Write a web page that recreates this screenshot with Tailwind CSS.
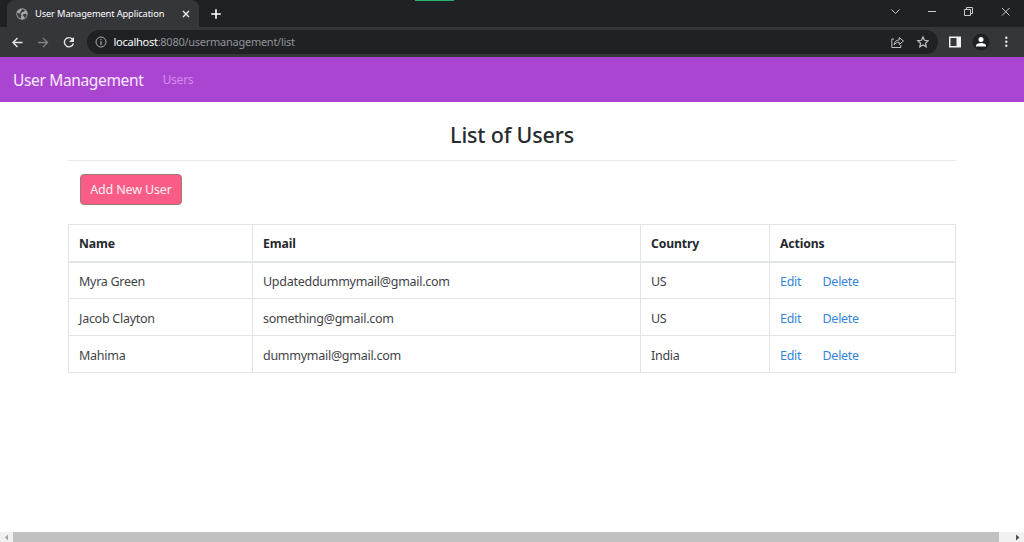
<!DOCTYPE html>
<html lang="en">
<head>
<meta charset="utf-8">
<title>User Management Application</title>
<script src="https://cdn.jsdelivr.net/npm/@tailwindcss/browser@4"></script>
</head>
<body class="relative flex h-[542px] w-[1024px] flex-col overflow-hidden bg-white font-['Noto_Sans','Open_Sans',sans-serif] text-[12.5px] text-[#3f4347]">
  <!-- Tab strip -->
  <div class="flex h-[27px] shrink-0 bg-[#202124] text-white">
    <div class="ml-[7px] flex w-[192px] items-center rounded-t-lg bg-[#35363a] pl-[9px] pr-[7px]">
      <svg class="size-3 shrink-0" viewBox="0 0 12 12"><circle cx="6" cy="6" r="5.7" fill="#a3a6aa"/><path d="M1 4.800l3.200.6 1.300 1.600-.6 1.300.2 2.200C2.600 10.200 1 8 1 4.800zM6 1.200l3 .8-1 1.800-2 .3-.8 1.300H3.700L5 3zM7 6.400l2-.7 1.800.8c0 1.700-.9 3-2.300 3.800L8.200 8.500 6.800 7.800z" fill="#3b3c40"/></svg>
      <span class="ml-[7px] whitespace-nowrap text-[9.3px] leading-[27px] tracking-[-0.13px]">User Management Application</span>
      <svg class="ml-auto size-[12px]" viewBox="0 0 12 12" stroke="#eee" stroke-width="1.400"><path d="M3 3l6 6M9 3l-6 6"/></svg>
    </div>
    <svg class="ml-[10px] mt-[7px] size-[14px]" viewBox="0 0 14 14" stroke="#fff" stroke-width="1.600"><path d="M7 2.200v9.600M2.200 7h9.600"/></svg>
    <div class="ml-auto flex h-[24px] items-center">
      <svg class="h-[24px] w-[134px]" viewBox="0 0 134 24" fill="none" stroke="#c9cacc" stroke-width="1"><path d="M1.500 9.500l4 4 4-4M38 11.500h8M74.500 9.500h6V15.500h-6zM76.500 9.500V7.500h6v6h-2M112 8l7.500 7.500M119.500 8l-7.500 7.500"/></svg>
    </div>
  </div>
  <!-- Toolbar -->
  <div class="flex h-[30px] shrink-0 items-center bg-[#35363a]">
    <svg class="h-[29px] w-[87px]" viewBox="0 0 87 29" fill="none" stroke="#e4e6e8" stroke-width="1.400"><path d="M22.500 14.500H13M17.500 10L13 14.500l4.500 4.500"/><path stroke="#7d8085" d="M38 14.500h9.500M43 10l4.500 4.500L43 19"/><path d="M72.500 11.300a4.600 4.600 0 1 0 .9 4.200"/><path fill="#e4e6e8" stroke="none" d="M74 9v5h-5z"/></svg>
    <div class="flex h-[24px] w-[851px] items-center rounded-full bg-[#202124] pl-2 pr-[9px]">
      <svg class="size-3" viewBox="0 0 12 12" fill="none" stroke="#a8abb0"><circle cx="6" cy="6" r="5"/><path d="M6 5.300V9M6 3v1.200" stroke-width="1.200"/></svg>
      <span class="ml-[6.500px] whitespace-nowrap text-[11px] leading-[22px] tracking-[-0.26px] text-[#8f9398]"><span class="text-white">localhost</span>:8080/usermanagement/list</span>
      <svg class="ml-auto h-[24px] w-[38px]" viewBox="0 0 38 24" fill="none" stroke="#bfc1c5" stroke-width="1"><path d="M3 9H.8v8.500h9V15M3 15c.4-3.200 2-5 5.200-5V7.500L12.500 11l-4.300 3.500V12.200C6 12.200 4.300 13 3 15z"/><path stroke-width="1.200" d="M32 6.900l1.500 3.400 3.700.4-2.750 2.500.75 3.650L32 15l-3.200 1.850.75-3.650-2.750-2.500 3.700-.4z"/></svg>
    </div>
    <svg class="h-[30px] w-[86px]" viewBox="0 0 86 30"><path fill="#f1f1f1" fill-rule="evenodd" d="M11 9.500h12v11H11zM12.500 11v8h6v-8z"/><circle cx="43" cy="15" r="8.500" fill="#202124"/><circle cx="43" cy="12.500" r="2.500" fill="#fff"/><path fill="#fff" d="M38 19.500v-1c0-3.400 10-3.400 10 0v1z"/><g fill="#e4e6e8"><circle cx="68.300" cy="10.700" r="1.200"/><circle cx="68.300" cy="14.700" r="1.200"/><circle cx="68.300" cy="18.700" r="1.200"/></g></svg>
  </div>
  <div class="absolute left-[415px] top-0 h-px w-[39px] bg-[#27ae70]"></div>
  <!-- Navigation bar -->
  <nav class="flex h-[45px] shrink-0 items-center bg-[#aa45d1] pl-[13px] pt-[2px]">
    <span class="whitespace-nowrap text-[15.5px] tracking-[-0.35px] text-[#fbeaff]">User Management</span>
    <span class="ml-[19px] text-[12.2px] tracking-[-0.3px] text-[#d78bee]">Users</span>
  </nav>
  <!-- Page content -->
  <main class="mx-[68px] flex grow flex-col">
    <h3 class="mt-[17px] text-center text-[21.5px] font-medium leading-8 tracking-[-0.18px] text-[#272b30]">List of Users</h3>
    <hr class="mt-[9px] border-[#e8e9ea]">
    <a class="ml-[12px] mt-[13px] flex h-[31px] w-[102px] items-center justify-center whitespace-nowrap rounded-[4px] border border-[#9c7d72] bg-[#f95c87] pt-[2px] text-[12.5px] tracking-[-0.15px] text-[#ffeef3]">Add New User</a>
    <table class="mt-[19px] w-[888px] table-fixed border-collapse text-left leading-5 tracking-[-0.27px] [&_td]:h-[37px] [&_td]:border [&_td]:border-[#e2e5e7] [&_td]:px-[10px] [&_td]:pb-0 [&_td]:pt-[3px] [&_th]:h-[37px] [&_th]:border [&_th]:border-b-2 [&_th]:border-[#e2e5e7] [&_th]:px-[10px] [&_th]:pb-0 [&_th]:pt-[2px]">
      <colgroup><col class="w-[184px]"><col class="w-[388px]"><col class="w-[129px]"><col></colgroup>
      <thead class="text-[12.2px] tracking-[-0.12px] text-[#24282c]"><tr><th>Name</th><th>Email</th><th>Country</th><th>Actions</th></tr></thead>
      <tbody>
        <tr><td>Myra Green</td><td>Updateddummymail@gmail.com</td><td>US</td><td class="text-[#3684d8]"><div class="flex"><a class="w-[42.500px]">Edit</a><a>Delete</a></div></td></tr>
        <tr><td>Jacob Clayton</td><td>something@gmail.com</td><td>US</td><td class="text-[#3684d8]"><div class="flex"><a class="w-[42.500px]">Edit</a><a>Delete</a></div></td></tr>
        <tr><td>Mahima</td><td>dummymail@gmail.com</td><td>India</td><td class="text-[#3684d8]"><div class="flex"><a class="w-[42.500px]">Edit</a><a>Delete</a></div></td></tr>
      </tbody>
    </table>
  </main>
  <!-- Horizontal scrollbar -->
  <div class="flex h-[10px] shrink-0 items-stretch bg-[#f1f1f1]">
    <svg class="h-[10px] w-[13px]" viewBox="0 0 13 10"><path d="M8 2.500v6L5 5.500z" fill="#a3a3a3"/></svg>
    <div class="w-[986px] bg-[#c1c1c1]"></div>
    <svg class="ml-auto h-[10px] w-[13px]" viewBox="0 0 13 10"><path d="M5 2.500v6l3.500-3z" fill="#505050"/></svg>
  </div>
</body>
</html>
